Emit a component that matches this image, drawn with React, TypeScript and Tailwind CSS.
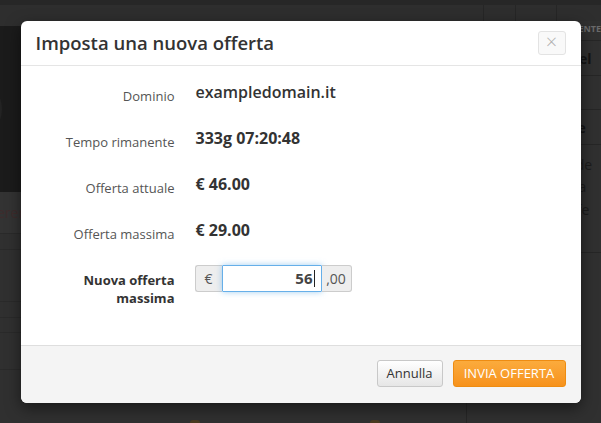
import React from "react";

const rows = [
  { label: "Dominio", value: "exampledomain.it", bold: false },
  { label: "Tempo rimanente", value: "333g 07:20:48", bold: true },
  { label: "Offerta attuale", value: "€ 46.00", bold: true },
  { label: "Offerta massima", value: "€ 29.00", bold: true },
];

function Background() {
  return (
    <div className="flex h-full w-full flex-col bg-[#303030]">
      {/* top bar */}
      <div className="h-[5px] bg-[#272727]" />
      <div className="flex h-[16px] bg-[#2e2e2e]">
        <div className="w-[484px] border-r border-[#262626]" />
        <div className="w-[32px] border-r border-[#262626]" />
        <div className="w-[41px] border-r border-[#262626]" />
        <div className="flex-1" />
      </div>

      <div className="flex flex-1">
        {/* main column */}
        <div className="flex w-[484px] flex-col border-r border-[#262626]">
          <div className="h-[5px] bg-[#2e2e2e]" />
          <div className="flex h-[166px] items-center bg-[#1b1b1b]">
            <div className="-ml-[60px] h-[62px] w-[62px] rounded-full bg-[#232323]" />
          </div>
          <div className="flex h-[42px] items-center border-b border-[#2a2a2a] bg-[#333]">
            <span className="-ml-[3px] text-[14px] text-[#3e2c2c]">ererenti</span>
          </div>
          <div className="h-[16px] border-b border-[#2a2a2a]" />
          <div className="h-[52px] border-b border-[#2a2a2a]" />
          <div className="h-[16px] border-b border-[#2a2a2a]" />
          <div className="h-[15px] border-b border-[#2a2a2a]" />
          <div className="h-[37px] border-b border-[#2a2a2a]" />
          <div className="flex flex-1 items-end gap-[170px] pl-[190px]">
            <div className="h-[3px] w-[10px] rounded-t bg-[#4a3a20]" />
            <div className="h-[3px] w-[10px] rounded-t bg-[#4a3a20]" />
          </div>
        </div>

        {/* sidebar */}
        <div className="flex flex-1 flex-col">
          <div className="h-[20px] border-b border-[#262626] pl-[83px] pt-[3px] text-[9px] font-bold uppercase leading-[10px] text-[#6a6a6a]">
            Offerente
          </div>
          <div className="flex h-[35px] items-center border-b border-[#262626] pl-[76px] text-[14px] font-bold text-[#141414]">
            Widdel
          </div>
          <div className="flex h-[34px] items-center border-b border-[#262626] pl-[78px] text-[14px] text-[#181818]">
            Iddex
          </div>
          <div className="flex h-[35px] items-center border-b border-[#262626] pl-[80px] text-[14px] font-bold text-[#141414]">
            Unite
          </div>
          <div className="flex h-[108px] flex-col justify-center border-b border-[#262626] pl-[78px] text-[14px] leading-[22.5px] text-[#1c1c1c]">
            <span>io vede</span>
            <span>risulta</span>
            <span>gli offe</span>
            <span>o il c</span>
          </div>
        </div>
      </div>
    </div>
  );
}

export default function App() {
  return (
    <div className="relative h-[423px] w-[601px] overflow-hidden font-['Open_Sans',sans-serif]">
      <Background />

      {/* dialog */}
      <div className="absolute inset-0 flex justify-center pt-[21px]">
        <div className="flex h-[382px] w-[560px] flex-col overflow-hidden rounded-[6px] bg-white shadow-[0_5px_15px_rgba(0,0,0,0.5)]">
          <div className="flex h-[45px] items-center justify-between border-b border-[#e5e5e5] px-[15px]">
            <h3 className="text-[18.5px] font-semibold text-[#333]">Imposta una nuova offerta</h3>
            <button className="flex h-[24px] w-[28px] items-center justify-center rounded-[3px] border border-[#e3e3e3] bg-[#f9f9f9] pb-[2px] text-[20px] font-light leading-none text-[#b0b0b0]">
              ×
            </button>
          </div>

          <div className="flex flex-1 flex-col gap-[14px] pt-[15px]">
            {rows.map((r) => (
              <div key={r.label} className="flex h-[32px] items-start">
                <div className="w-[154px] pt-[6px] text-right text-[13px] leading-[18px] text-[#555]">{r.label}</div>
                <div
                  className={`pl-[21px] text-[16px] leading-[22px] text-[#333] ${r.bold ? "font-bold" : "font-semibold"}`}
                >
                  {r.value}
                </div>
              </div>
            ))}
            <div className="flex items-start">
              <div className="ml-[34px] w-[120px] pt-[6px] text-right text-[13px] font-bold leading-[18px] text-[#333]">
                Nuova offerta massima
              </div>
              <div className="ml-[20px] flex h-[27px] text-[14px] text-[#555]">
                <div className="flex w-[27px] items-center justify-center rounded-l-[3px] border border-r-0 border-[#ccc] bg-[#eee]">
                  €
                </div>
                <div className="flex w-[100px] items-center justify-end rounded-[1px] border border-[#66afe9] bg-white pr-[6px] text-[15px] font-bold text-[#444] shadow-[0_0_6px_rgba(102,175,233,0.6)]">
                  56<span className="ml-[1px] h-[17px] w-px bg-[#222]" />
                </div>
                <div className="flex w-[30px] items-center justify-center rounded-r-[3px] border border-l-0 border-[#ccc] bg-[#eee]">
                  ,00
                </div>
              </div>
            </div>
          </div>

          <div className="flex h-[58px] items-start justify-end gap-[10px] border-t border-[#dedede] bg-[#f4f4f4] px-[15px] pt-[14px]">
            <button className="h-[27px] w-[66px] rounded-[3px] border border-[#c8c8c8] bg-gradient-to-b from-white to-[#e6e6e6] text-[13px] text-[#333]">
              Annulla
            </button>
            <button className="h-[27px] w-[113px] rounded-[3px] border border-[#ee8c12] bg-gradient-to-b from-[#fbab3c] to-[#f7921b] text-[13px] uppercase text-white">
              Invia offerta
            </button>
          </div>
        </div>
      </div>
    </div>
  );
}
